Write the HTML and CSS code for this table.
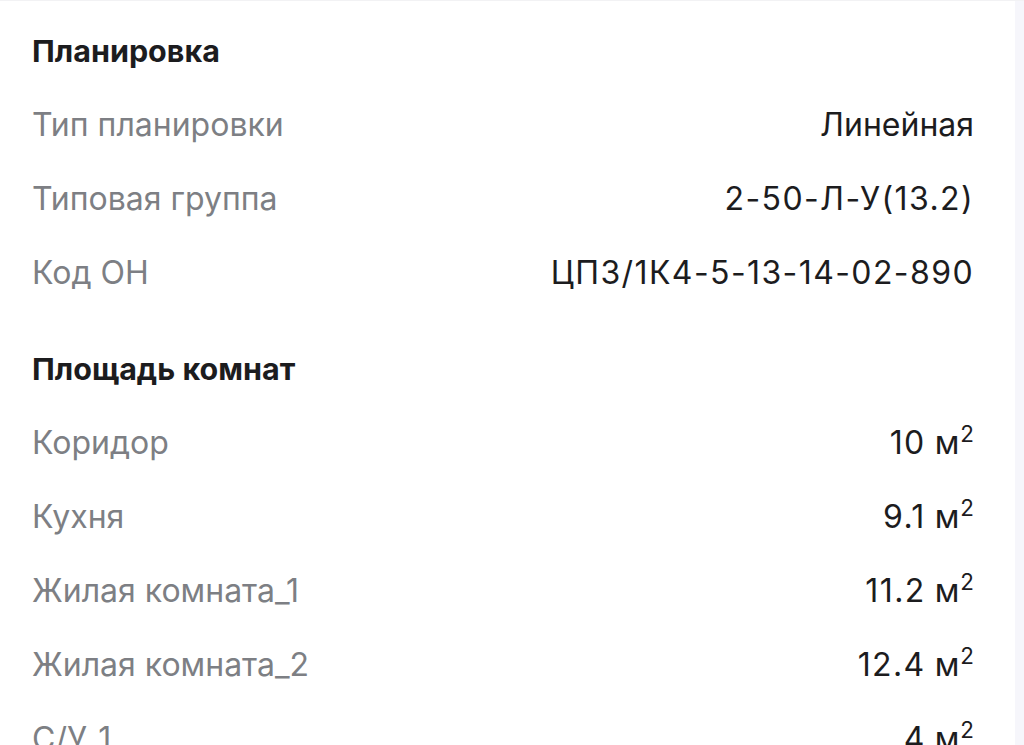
FILE: index.html
```html
<!DOCTYPE html>
<html lang="ru">
<head>
<meta charset="utf-8">
<link rel="stylesheet" href="styles.css">
</head>
<body>
<div class="page">
  <main class="content">
    <section class="group">
      <h2 class="group-title">Планировка</h2>
      <div class="row"><span class="label">Тип планировки</span><span class="value">Линейная</span></div>
      <div class="row"><span class="label">Типовая группа</span><span class="value num">2-50-Л-У(13.2)</span></div>
      <div class="row"><span class="label">Код ОН</span><span class="value num">ЦПЗ/1К4-5-13-14-02-890</span></div>
    </section>
    <section class="group group-second">
      <h2 class="group-title">Площадь комнат</h2>
      <div class="row"><span class="label">Коридор</span><span class="value"><span class="num">10</span> <span class="unit">м<sup>2</sup></span></span></div>
      <div class="row"><span class="label">Кухня</span><span class="value"><span class="num">9.1</span> <span class="unit">м<sup>2</sup></span></span></div>
      <div class="row"><span class="label">Жилая комната_1</span><span class="value"><span class="num">11.2</span> <span class="unit">м<sup>2</sup></span></span></div>
      <div class="row"><span class="label">Жилая комната_2</span><span class="value"><span class="num">12.4</span> <span class="unit">м<sup>2</sup></span></span></div>
      <div class="row"><span class="label">С/У_1</span><span class="value"><span class="num">4</span> <span class="unit">м<sup>2</sup></span></span></div>
    </section>
  </main>
  <div class="edge"></div>
</div>
</body>
</html>
```

FILE: styles.css
```css
html, body {
  margin: 0;
  padding: 0;
  background: #ffffff;
  overflow: hidden;
}
.page {
  display: flex;
  height: 745px;
  border-top: 1px solid #f2f2f4;
  box-sizing: border-box;
}
.content {
  flex: 1;
  padding: 12px 41px 0 32px;
  font-family: Inter, "Noto Sans", sans-serif;
}
.edge {
  width: 9px;
  background: #f6f6fb;
}
.group-second {
  margin-top: 22px;
}
.group-title {
  margin: 0;
  height: 74px;
  display: flex;
  align-items: center;
  font-size: 30.5px;
  font-weight: 700;
  color: #1c1c1e;
}
.row {
  height: 74px;
  display: flex;
  align-items: center;
  justify-content: space-between;
  font-size: 32px;
}
.label {
  color: #7d7f84;
}
.value {
  color: #1c1c1e;
}
.num {
  letter-spacing: 1.4px;
}
.unit {
  letter-spacing: 0;
}
.value sup {
  font-size: 0.7em;
  vertical-align: 0;
  position: relative;
  top: -0.5em;
  margin-left: 1px;
}
```
